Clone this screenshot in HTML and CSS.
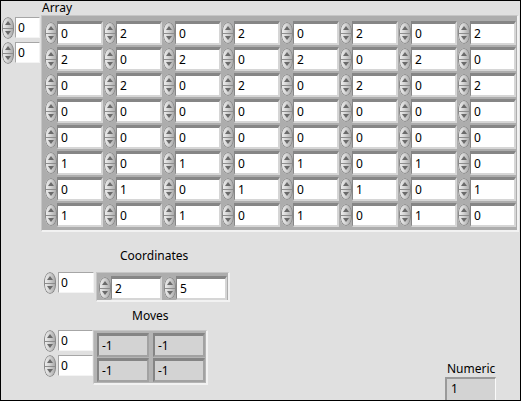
FILE: index.html
```html
<!DOCTYPE html>
<html>
<head>
<meta charset="utf-8">
<link rel="stylesheet" href="styles.css">
</head>
<body>
<div class="panel">
  <div class="label array-label">Array</div>
  <div class="top-row">
    <div class="indices">
      <div class="idx"><span class="spin"></span><span class="ibox w24">0</span></div>
      <div class="idx"><span class="spin"></span><span class="ibox w24">0</span></div>
    </div>
    <div class="array-frame">
      <div class="grid">
        <div class="cell"><span class="spin"></span><span class="num">0</span></div>
        <div class="cell"><span class="spin"></span><span class="num">2</span></div>
        <div class="cell"><span class="spin"></span><span class="num">0</span></div>
        <div class="cell"><span class="spin"></span><span class="num">2</span></div>
        <div class="cell"><span class="spin"></span><span class="num">0</span></div>
        <div class="cell"><span class="spin"></span><span class="num">2</span></div>
        <div class="cell"><span class="spin"></span><span class="num">0</span></div>
        <div class="cell"><span class="spin"></span><span class="num">2</span></div>

        <div class="cell"><span class="spin"></span><span class="num">2</span></div>
        <div class="cell"><span class="spin"></span><span class="num">0</span></div>
        <div class="cell"><span class="spin"></span><span class="num">2</span></div>
        <div class="cell"><span class="spin"></span><span class="num">0</span></div>
        <div class="cell"><span class="spin"></span><span class="num">2</span></div>
        <div class="cell"><span class="spin"></span><span class="num">0</span></div>
        <div class="cell"><span class="spin"></span><span class="num">2</span></div>
        <div class="cell"><span class="spin"></span><span class="num">0</span></div>

        <div class="cell"><span class="spin"></span><span class="num">0</span></div>
        <div class="cell"><span class="spin"></span><span class="num">2</span></div>
        <div class="cell"><span class="spin"></span><span class="num">0</span></div>
        <div class="cell"><span class="spin"></span><span class="num">2</span></div>
        <div class="cell"><span class="spin"></span><span class="num">0</span></div>
        <div class="cell"><span class="spin"></span><span class="num">2</span></div>
        <div class="cell"><span class="spin"></span><span class="num">0</span></div>
        <div class="cell"><span class="spin"></span><span class="num">2</span></div>

        <div class="cell"><span class="spin"></span><span class="num">0</span></div>
        <div class="cell"><span class="spin"></span><span class="num">0</span></div>
        <div class="cell"><span class="spin"></span><span class="num">0</span></div>
        <div class="cell"><span class="spin"></span><span class="num">0</span></div>
        <div class="cell"><span class="spin"></span><span class="num">0</span></div>
        <div class="cell"><span class="spin"></span><span class="num">0</span></div>
        <div class="cell"><span class="spin"></span><span class="num">0</span></div>
        <div class="cell"><span class="spin"></span><span class="num">0</span></div>

        <div class="cell"><span class="spin"></span><span class="num">0</span></div>
        <div class="cell"><span class="spin"></span><span class="num">0</span></div>
        <div class="cell"><span class="spin"></span><span class="num">0</span></div>
        <div class="cell"><span class="spin"></span><span class="num">0</span></div>
        <div class="cell"><span class="spin"></span><span class="num">0</span></div>
        <div class="cell"><span class="spin"></span><span class="num">0</span></div>
        <div class="cell"><span class="spin"></span><span class="num">0</span></div>
        <div class="cell"><span class="spin"></span><span class="num">0</span></div>

        <div class="cell"><span class="spin"></span><span class="num">1</span></div>
        <div class="cell"><span class="spin"></span><span class="num">0</span></div>
        <div class="cell"><span class="spin"></span><span class="num">1</span></div>
        <div class="cell"><span class="spin"></span><span class="num">0</span></div>
        <div class="cell"><span class="spin"></span><span class="num">1</span></div>
        <div class="cell"><span class="spin"></span><span class="num">0</span></div>
        <div class="cell"><span class="spin"></span><span class="num">1</span></div>
        <div class="cell"><span class="spin"></span><span class="num">0</span></div>

        <div class="cell"><span class="spin"></span><span class="num">0</span></div>
        <div class="cell"><span class="spin"></span><span class="num">1</span></div>
        <div class="cell"><span class="spin"></span><span class="num">0</span></div>
        <div class="cell"><span class="spin"></span><span class="num">1</span></div>
        <div class="cell"><span class="spin"></span><span class="num">0</span></div>
        <div class="cell"><span class="spin"></span><span class="num">1</span></div>
        <div class="cell"><span class="spin"></span><span class="num">0</span></div>
        <div class="cell"><span class="spin"></span><span class="num">1</span></div>

        <div class="cell"><span class="spin"></span><span class="num">1</span></div>
        <div class="cell"><span class="spin"></span><span class="num">0</span></div>
        <div class="cell"><span class="spin"></span><span class="num">1</span></div>
        <div class="cell"><span class="spin"></span><span class="num">0</span></div>
        <div class="cell"><span class="spin"></span><span class="num">1</span></div>
        <div class="cell"><span class="spin"></span><span class="num">0</span></div>
        <div class="cell"><span class="spin"></span><span class="num">1</span></div>
        <div class="cell"><span class="spin"></span><span class="num">0</span></div>
      </div>
    </div>
  </div>

  <div class="label coords-label">Coordinates</div>
  <div class="coords-row">
    <div class="idx"><span class="spin"></span><span class="ibox w36">0</span></div>
    <div class="cluster">
      <div class="cell wide"><span class="spin"></span><span class="num">2</span></div>
      <div class="cell wide"><span class="spin"></span><span class="num">5</span></div>
    </div>
  </div>

  <div class="label moves-label">Moves</div>
  <div class="moves-row">
    <div class="indices tight">
      <div class="idx"><span class="spin"></span><span class="ibox w35">0</span></div>
      <div class="idx"><span class="spin"></span><span class="ibox w35">0</span></div>
    </div>
    <div class="moves-frame">
      <span class="ind">-1</span><span class="ind">-1</span>
      <span class="ind">-1</span><span class="ind">-1</span>
    </div>
    <div class="numeric">
      <div class="label numeric-label">Numeric</div>
      <div class="nbox">1</div>
    </div>
  </div>
</div>
</body>
</html>
```

FILE: styles.css
```css
* { box-sizing: border-box; }

body {
  margin: 0;
  font-family: "Noto Sans", "DejaVu Sans", sans-serif;
  font-size: 12px;
  color: #000;
}

.panel {
  width: 521px;
  height: 401px;
  background: #e0e0e0;
  border: 1px solid #000;
  overflow: hidden;
}

.label {
  height: 16px;
  line-height: 16px;
  white-space: nowrap;
}

.array-label { margin-left: 41px; margin-top: -1px; height: 15px; }

.top-row { display: flex; align-items: flex-start; }

.indices {
  width: 40px;
  padding: 2px 0 0 1px;
  display: flex;
  flex-direction: column;
  gap: 3px;
}

.idx { display: flex; align-items: flex-start; }

/* spinner */
.spin {
  position: relative;
  display: block;
  flex: none;
  width: 12px;
  height: 22px;
  border-radius: 6px / 9px;
  background:
    linear-gradient(#8c8c8c, #8c8c8c) center / 100% 1px no-repeat,
    linear-gradient(90deg, #f2f2f2 0%, #d4d4d4 45%, #a4a4a4 100%);
  box-shadow: inset 0 0 0 1px #8a8a8a;
}
.spin::before,
.spin::after {
  content: "";
  position: absolute;
  left: 3px;
  border-left: 3px solid transparent;
  border-right: 3px solid transparent;
}
.spin::before { top: 4px; border-bottom: 4px solid #6a6a6a; }
.spin::after { bottom: 4px; border-top: 4px solid #6a6a6a; }

.ibox {
  display: block;
  margin-left: 1px;
  height: 21px;
  line-height: 19px;
  padding-left: 2px;
  background: #fff;
  border: 1px solid;
  border-color: #a6a6a6 #f4f4f4 #f4f4f4 #a6a6a6;
}
.w24 { width: 25px; }
.w36 { width: 36px; margin-left: 2px; }
.w35 { width: 35px; margin-left: 2px; }

/* array frame */
.array-frame {
  width: 478px;
  height: 217px;
  background: #adadad;
  border-style: solid;
  border-width: 1px 2px 2px 1px;
  border-color: #c6c6c6 #f2f2f2 #f2f2f2 #c6c6c6;
  padding: 5px 0 0 3px;
}

.grid {
  display: grid;
  grid-template-columns: repeat(8, 59px);
  grid-auto-rows: 26px;
}

.cell { display: flex; align-items: flex-start; }
.cell .spin { margin-top: 1px; }

.num {
  display: block;
  width: 46px;
  height: 24px;
  line-height: 19px;
  padding-left: 3px;
  background: #fff;
  border-style: solid;
  border-width: 3px 2px 2px 1px;
  border-color: #868686 #d6d6d6 #d6d6d6 #868686;
}

/* coordinates */
.coords-label { margin: 16px 0 0 119px; }

.coords-row {
  display: flex;
  align-items: flex-start;
  margin: 8px 0 0 43px;
}

.cluster {
  display: flex;
  gap: 2px;
  margin-left: 2px;
  width: 134px;
  height: 30px;
  padding: 3px 0 0 2px;
  background: #adadad;
  border-style: solid;
  border-width: 1px 2px 2px 1px;
  border-color: #c6c6c6 #f2f2f2 #f2f2f2 #c6c6c6;
}
.cluster .cell .spin { margin-top: 1px; }
.cell.wide .num { width: 51px; }

/* moves */
.moves-label { margin: 6px 0 0 131px; }

.moves-row {
  display: flex;
  align-items: flex-start;
  margin: 6px 0 0 43px;
}

.indices.tight { width: auto; padding: 0; }

.moves-frame {
  display: grid;
  grid-template-columns: 52px 52px;
  grid-auto-rows: 24px;
  column-gap: 4px;
  row-gap: 1px;
  width: 115px;
  height: 55px;
  padding: 2px 0 0 3px;
  background: #b4b4b4;
  border-style: solid;
  border-width: 1px 2px 2px 1px;
  border-color: #c6c6c6 #f2f2f2 #f2f2f2 #c6c6c6;
}

.ind {
  display: block;
  line-height: 19px;
  padding-left: 3px;
  background: #d3d3d3;
  border-style: solid;
  border-width: 3px 2px 2px 2px;
  border-color: #858585 #a2a2a2 #a2a2a2 #858585;
}

.numeric {
  margin: 31px 24px 0 auto;
  width: 51px;
}
.numeric-label { padding-left: 2px; }

.nbox {
  height: 24px;
  line-height: 20px;
  padding-left: 4px;
  background: #d3d3d3;
  border-style: solid;
  border-width: 2px 1px 0 2px;
  border-color: #9a9a9a #fafafa #fafafa #9a9a9a;
}
```
